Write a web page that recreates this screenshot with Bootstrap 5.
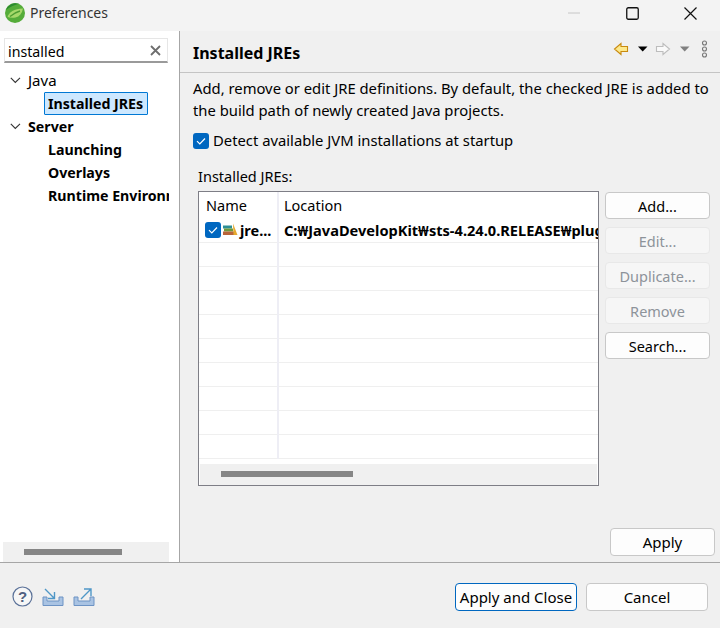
<!DOCTYPE html>
<html lang="en">
<head>
<meta charset="utf-8">
<title>Preferences</title>
<link href="https://cdn.jsdelivr.net/npm/bootstrap@5.3.0/dist/css/bootstrap.min.css" rel="stylesheet">
<style>
html,body{height:628px;width:720px;overflow:hidden;margin:0}
body{font-family:"Noto Sans","Open Sans",sans-serif;font-size:15px;line-height:23px;color:#000;background:#f0f0f0}
.win-title{height:31px;background:#f3f3f3;padding-left:5px}
.win-title span{font-size:14px;color:#333;margin-left:5px;line-height:26px}
.win-ctrl{width:58.5px;height:26px}
.main-area{height:532px;border-bottom:1px solid #a6a6a6}
.side{width:180px;background:#fff;border-right:1px solid #a6a6a6;padding:7px 0 0}
.searchbox{margin:0 11px 0 4px;height:25px;border:1px solid #e6e6e6;border-bottom:2px solid #9a9a9a;padding:0 6px 0 3px;font-size:14.2px;line-height:23px;background:#fff}
.searchbox span{padding-top:2px}
.tree{padding-top:6px;min-height:0;white-space:nowrap;overflow:hidden}
.tree-row{height:23px;line-height:23px;width:169px;overflow:hidden}
.chev{width:28px;padding-left:10px;flex:none}
.lbl-pad{padding-left:48px;font-weight:700;font-size:14.2px}
.sel-row{padding-left:44px}
.sel-box{background:#cde8ff;border:1px solid #0078d4;padding:0 3px;height:23px;line-height:21px;font-weight:700;font-size:14.2px;border-radius:1px;width:104px}
.fw-tree{font-weight:700;font-size:14.2px}
.side-scroll{height:20px;margin:0 10px 0 3px;background:#f0f0f0}
.side-thumb{width:98px;height:6px;margin-left:21px;background:#868686}
.pane{min-width:0;padding:0}
.pane-head{height:42px;border-bottom:1px solid #c4c4c4;padding:4px 13px 0}
.pane-head h1{font-size:16px;font-weight:700;margin:0;line-height:23px}
.tools{margin-right:-6px;margin-bottom:10px}
.pane-body{padding:4px 10px 0 13px;position:relative}
.intro{margin:0;font-size:14.8px;line-height:22px;white-space:nowrap}
.chk{width:16px;height:16px;background:#0067c0;border-radius:3px;flex:none}
.detect{margin-top:8px;height:23px;font-size:14.8px}
.detect span{margin-left:4px}
.jre-label{margin:13px 0 2px 5px;height:24px;font-size:14.5px}
.list-wrap{margin-left:5px;gap:6px}
.jre-box{width:401px;height:295px;border:1px solid #7e7e86;background:#fff;padding:0;overflow:hidden;flex:none}
.jre-grid{table-layout:fixed;width:399px;margin:0;border-collapse:collapse;--bs-table-bg:transparent}
.jre-grid th,.jre-grid td{height:24px;padding:0;font-size:14.5px;line-height:22px;white-space:nowrap;overflow:hidden;border:0;border-bottom:1px solid #efefef;color:#000;vertical-align:middle}
.jre-grid th{font-weight:400;border-bottom:0;height:26px;padding-left:7px}
.jre-grid th+th,.jre-grid td+td{border-left:2px solid #eeeef5;padding-left:5px}
.jre-grid td.loc{font-weight:700;font-size:14.6px;padding-top:1px}
.jre-grid td:first-child{padding-left:6px}
.name-cell{gap:2px;font-weight:700;padding-top:1px}
.jre-hs{height:21px;background:#f0f0f0;margin:5px 1px 0;padding-top:7px}
.jre-thumb{width:132px;height:6px;background:#868686;margin-left:21px}
.side-btns{gap:8px;width:105px;margin-top:1px}
.ebtn{--bs-btn-padding-y:0;--bs-btn-padding-x:0;--bs-btn-font-size:14.5px;--bs-btn-line-height:27px;--bs-btn-color:#000;--bs-btn-bg:#fdfdfd;--bs-btn-border-color:#c8c8c8;--bs-btn-border-radius:4px;--bs-btn-hover-bg:#fdfdfd;--bs-btn-hover-color:#000;--bs-btn-hover-border-color:#c8c8c8;width:105px;height:27px;font-family:inherit}
.ebtn:disabled{--bs-btn-disabled-color:#8d939a;--bs-btn-disabled-bg:#f6f6f6;--bs-btn-disabled-border-color:#e8e8e8;--bs-btn-disabled-opacity:1}
.apply-row{position:absolute;top:455px;left:430px}
.apply-row .ebtn{height:28px;--bs-btn-font-size:15px;--bs-btn-line-height:25px}
.foot{height:65px;padding:20px 12px 0 12px}
.foot .ebtn{width:122px;height:28px;--bs-btn-font-size:15px;--bs-btn-line-height:25px}
.foot .prim{--bs-btn-border-color:#0067c0;--bs-btn-hover-border-color:#0067c0}
.foot-gap{gap:9px;margin-top:3px}
.foot-btns{gap:9px}
</style>
</head>
<body>
<div class="win-title d-flex align-items-start">
  <div class="d-flex align-items-center">
    <svg width="20" height="24" viewBox="0 0 20 24"><circle cx="10" cy="12" r="10" fill="#55ac3a"/><path d="M1 9a10 10 0 0 1 13-6.200C10 4 5 5.500 1 9z" fill="#2c8a30"/><path d="M2.500 16C4 11 9 8 18 7.500c-1 5-3.500 8-7.500 9-3 .7-6 .3-8-.5z" fill="#a6d86a"/><path d="M5 15.500c3-2.500 6-4.500 10-5.500" stroke="#4d9c32" stroke-width="1.300" fill="none"/></svg>
    <span>Preferences</span>
  </div>
  <div class="ms-auto d-flex">
    <div class="win-ctrl d-flex align-items-center justify-content-center"><svg width="12" height="12"><path d="M0 6h12" stroke="#c6c6c6" stroke-width="1"/></svg></div>
    <div class="win-ctrl d-flex align-items-center justify-content-center"><svg width="13" height="13"><rect x=".75" y=".75" width="11.5" height="11.500" rx="1.500" fill="none" stroke="#111" stroke-width="1.300"/></svg></div>
    <div class="win-ctrl d-flex align-items-center justify-content-center"><svg width="13" height="13"><path d="M.5.5l12 12M12.500.5l-12 12" stroke="#111" stroke-width="1.200"/></svg></div>
  </div>
</div>
<div class="main-area d-flex">
  <div class="side d-flex flex-column flex-shrink-0">
    <div class="searchbox d-flex align-items-center justify-content-between"><span>installed</span><svg width="11" height="11"><path d="M1 1l9 9M10 1l-9 9" stroke="#6e6e6e" stroke-width="1.800"/></svg></div>
    <div class="tree flex-grow-1">
      <div class="tree-row d-flex align-items-center"><div class="chev"><svg width="11" height="7" class="d-block"><path d="M.8.8l4.500 4.700 4.700-4.700" fill="none" stroke="#333" stroke-width="1.100"/></svg></div><span>Java</span></div>
      <div class="tree-row d-flex sel-row"><div class="sel-box">Installed JREs</div></div>
      <div class="tree-row d-flex align-items-center"><div class="chev"><svg width="11" height="7" class="d-block"><path d="M.8.8l4.500 4.700 4.700-4.700" fill="none" stroke="#333" stroke-width="1.100"/></svg></div><span class="fw-tree">Server</span></div>
      <div class="tree-row lbl-pad">Launching</div>
      <div class="tree-row lbl-pad">Overlays</div>
      <div class="tree-row lbl-pad">Runtime Environments</div>
    </div>
    <div class="side-scroll d-flex align-items-center"><div class="side-thumb"></div></div>
  </div>
  <div class="pane flex-grow-1 d-flex flex-column">
    <div class="pane-head d-flex align-items-center justify-content-between">
      <h1>Installed JREs</h1>
      <svg class="tools" width="100" height="20" viewBox="0 0 100 20">
        <path d="M8 4.500L1.500 10 8 15.500v-3h6.500v-5H8z" fill="#fde98c" stroke="#c98a10" stroke-width="1.100"/>
        <path d="M25 7.500h9.500L29.700 12.500z" fill="#000"/>
        <path d="M50 4.500l6.500 5.500-6.500 5.500v-3h-6.500v-5H50z" fill="#fafafa" stroke="#bdbdbd" stroke-width="1.100"/>
        <path d="M67 7.500h9.500L71.700 12.500z" fill="#808080"/>
        <g fill="none" stroke="#777" stroke-width="1.100"><circle cx="91.500" cy="4" r="2"/><circle cx="91.500" cy="10" r="2"/><circle cx="91.500" cy="16" r="2"/></g>
      </svg>
    </div>
    <div class="pane-body flex-grow-1">
      <p class="intro">Add, remove or edit JRE definitions. By default, the checked JRE is added to<br>the build path of newly created Java projects.</p>
      <div class="detect d-flex align-items-center">
        <svg class="chk" width="16" height="16" viewBox="0 0 16 16"><path d="M4 8.200l2.800 2.800L12 5.500" fill="none" stroke="#fff" stroke-width="1.200"/></svg>
        <span>Detect available JVM installations at startup</span>
      </div>
      <div class="jre-label">Installed JREs:</div>
      <div class="list-wrap d-flex align-items-start">
        <div class="jre-box">
          <table class="table jre-grid">
            <colgroup><col style="width:79px"><col></colgroup>
            <thead><tr><th>Name</th><th>Location</th></tr></thead>
            <tbody>
              <tr><td><div class="name-cell d-flex align-items-center">
                <svg class="chk" width="16" height="16" viewBox="0 0 16 16"><path d="M4 8.200l2.800 2.800L12 5.500" fill="none" stroke="#fff" stroke-width="1.200"/></svg>
                <svg width="15" height="14" viewBox="0 0 15 14" class="flex-shrink-0"><rect x="0" y="2.500" width="9" height="3" fill="#2e8f96"/><rect x="1" y="5.500" width="9" height="3" fill="#6f9a3c"/><rect x="0" y="8.500" width="11" height="3.500" fill="#b8643a"/><path d="M10 .5l4.500 11.500h-4z" fill="#e6a92e"/></svg>
                <span>jre...</span></div></td>
                <td class="loc">C:₩JavaDevelopKit₩sts-4.24.0.RELEASE₩plugins</td></tr>
              <tr><td></td><td></td></tr><tr><td></td><td></td></tr><tr><td></td><td></td></tr><tr><td></td><td></td></tr>
              <tr><td></td><td></td></tr><tr><td></td><td></td></tr><tr><td></td><td></td></tr><tr><td></td><td></td></tr><tr><td></td><td></td></tr>
            </tbody>
          </table>
          <div class="jre-hs"><div class="jre-thumb"></div></div>
        </div>
        <div class="side-btns d-flex flex-column">
          <button class="btn ebtn" type="button">Add...</button>
          <button class="btn ebtn" type="button" disabled>Edit...</button>
          <button class="btn ebtn" type="button" disabled>Duplicate...</button>
          <button class="btn ebtn" type="button" disabled>Remove</button>
          <button class="btn ebtn" type="button">Search...</button>
        </div>
      </div>
      <div class="apply-row"><button class="btn ebtn" type="button">Apply</button></div>
    </div>
  </div>
</div>
<div class="foot d-flex align-items-start justify-content-between">
  <div class="d-flex foot-gap align-items-center">
    <svg width="21" height="21" viewBox="0 0 21 21"><circle cx="10.500" cy="10.500" r="9.500" fill="#fff" fill-opacity=".4" stroke="#5b7299" stroke-width="1.200"/><text x="10.500" y="16" text-anchor="middle" font-family="Liberation Sans" font-weight="700" font-size="15" fill="#4f5f80">?</text></svg>
    <svg width="22" height="20" viewBox="0 0 22 20"><path d="M1 10v8.500h20V10h-4v4H5v-4z" fill="#a9c3e3" stroke="#6d93c4"/><path d="M3 2l9 9M12.500 5v6.500H6" fill="none" stroke="#4f97c7" stroke-width="1.400"/></svg>
    <svg width="22" height="20" viewBox="0 0 22 20"><path d="M1 10v8.500h20V10h-4v4H5v-4z" fill="#a9c3e3" stroke="#6d93c4"/><path d="M8 12l10-10M11 2h7v7" fill="none" stroke="#4f97c7" stroke-width="1.400"/></svg>
  </div>
  <div class="d-flex foot-btns">
    <button class="btn ebtn prim" type="button">Apply and Close</button>
    <button class="btn ebtn" type="button">Cancel</button>
  </div>
</div>
<script src="https://cdn.jsdelivr.net/npm/bootstrap@5.3.0/dist/js/bootstrap.bundle.min.js"></script>
</body>
</html>
